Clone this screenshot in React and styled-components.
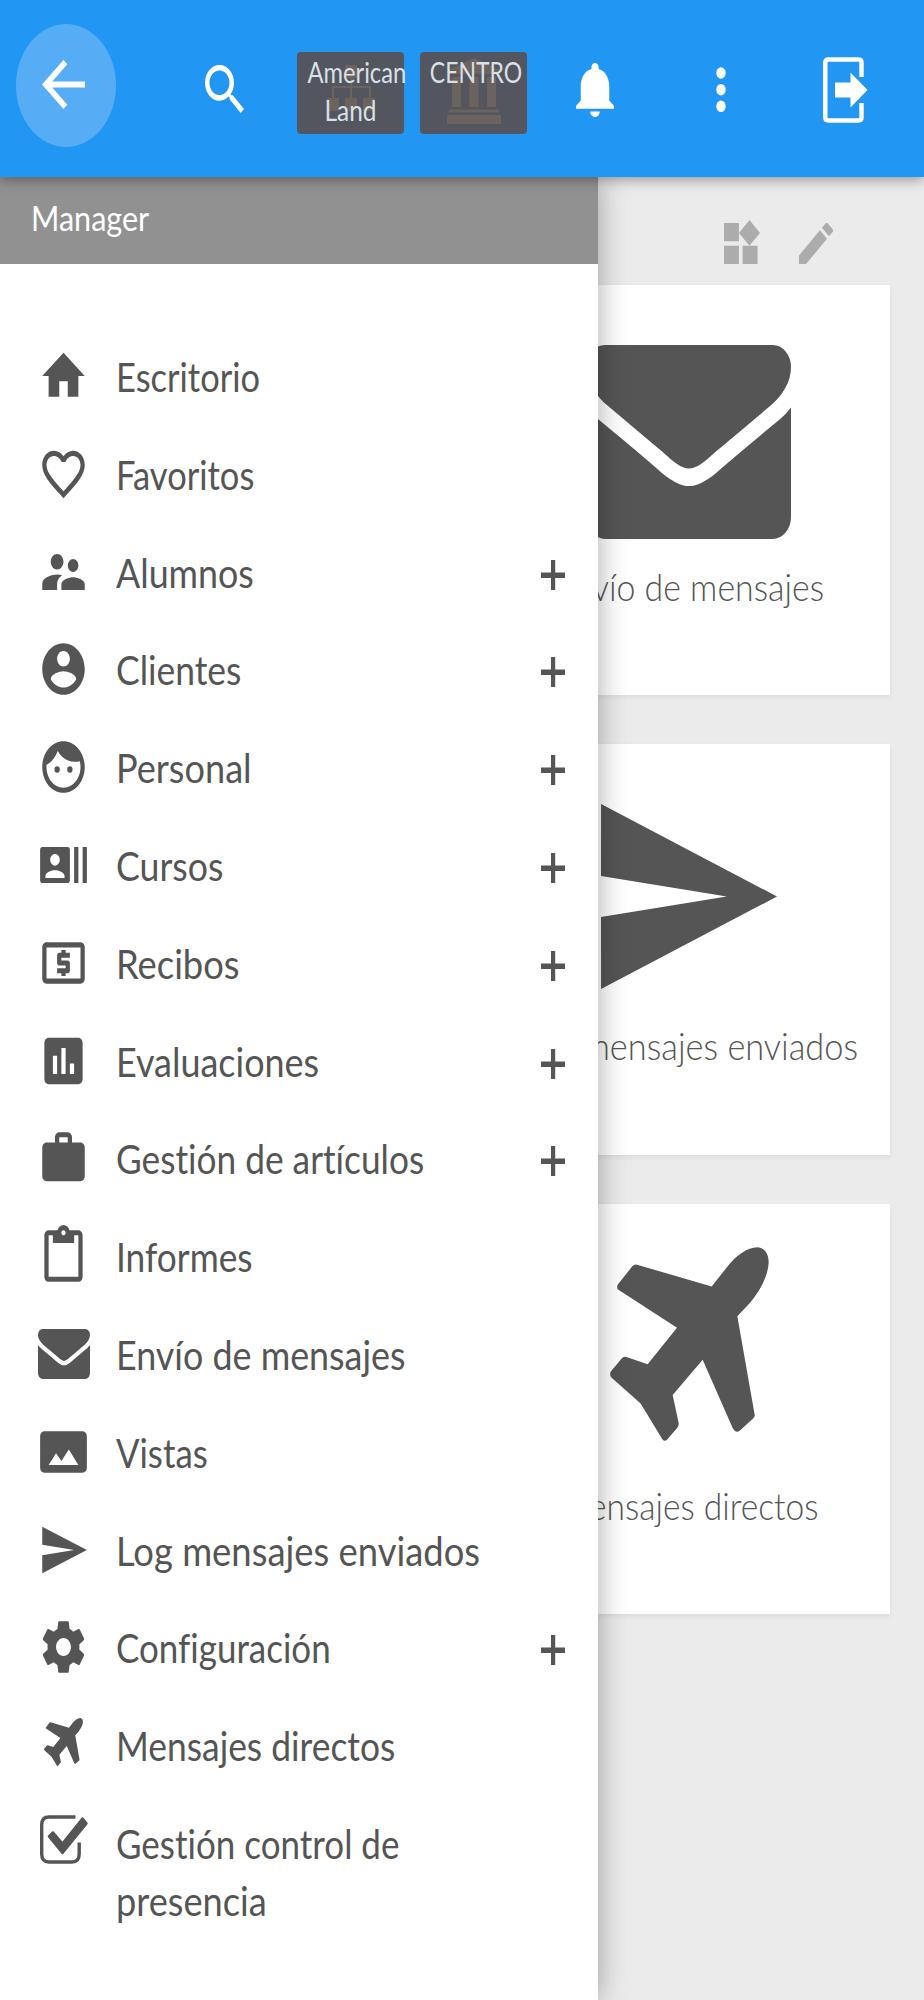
import React, { useLayoutEffect, useRef, useState } from "react";
import styled, { createGlobalStyle } from "styled-components";
import {
  MdArrowBack,
  MdAssessment,
  MdEdit,
  MdFace,
  MdFavoriteBorder,
  MdLocalAtm,
  MdRecentActors,
  MdSearch,
  MdSend,
  MdSupervisorAccount,
  MdWidgets,
  MdWork,
} from "react-icons/md";

const STRETCH = 1.22;

const GlobalStyle = createGlobalStyle`
  * {
    box-sizing: border-box;
  }
  body {
    margin: 0;
    background: #ebebeb;
    font-family: Lato, "Open Sans", sans-serif;
    font-variant-ligatures: none;
    color: #555;
  }
`;

const Page = styled.div`
  display: flex;
  flex-direction: column;
  width: 924px;
  height: 2000px;
  overflow: hidden;
`;

const Header = styled.header`
  position: relative;
  z-index: 2;
  flex: none;
  display: flex;
  align-items: flex-start;
  height: 177px;
  padding-left: 16px;
  background: #2196f3;
  color: #fff;
  box-shadow: 0 3px 12px rgba(0, 0, 0, 0.36);
`;

const BackButton = styled.div`
  display: flex;
  align-items: center;
  width: 100px;
  height: 123px;
  margin-top: 24px;
  padding: 0 0 2px 26px;
  border-radius: 50%;
  background: #56adf6;
`;

const HeaderIcon = styled.div`
  display: flex;
  margin: ${(props) => props.$top}px 0 0 ${(props) => props.$left}px;
`;

const Chip = styled.div`
  display: grid;
  grid-template-columns: 107px;
  justify-items: center;
  align-items: start;
  width: 107px;
  height: 82px;
  margin: 52px 0 0 ${(props) => props.$left}px;
  border-radius: 4px;
  background: #53565f;
  color: #d9e0e8;

  > * {
    grid-area: 1 / 1;
  }
`;

const ChipIcon = styled.div`
  display: flex;
  margin-top: ${(props) => props.$top}px;
  color: #6c635f;
`;

const ChipText = styled.div`
  display: flex;
  flex-direction: column;
  align-items: center;
  padding-top: 1px;
  font-size: 23px;
  line-height: 38px;
`;

const ChipLine = styled.div`
  padding-left: ${(props) => props.$indent || 0}px;
`;

const Body = styled.div`
  display: flex;
  flex: 1;
`;

const Drawer = styled.aside`
  position: relative;
  z-index: 1;
  flex: none;
  width: 598px;
  background: #fff;
  box-shadow: 0 0 28px rgba(0, 0, 0, 0.34);
`;

const DrawerTitle = styled.div`
  display: flex;
  height: 87px;
  padding: 23px 0 0 31px;
  background: #919191;
  color: #fff;
  font-size: 29px;
  line-height: 40px;
`;

const Menu = styled.nav`
  display: flex;
  flex-direction: column;
  padding-top: 63px;
`;

const MenuItem = styled.div`
  display: flex;
  align-items: flex-start;
  min-height: 97.8px;
  padding: 18px 33px 0 37.5px;
`;

const IconSlot = styled.div`
  display: flex;
  flex: none;
  align-items: center;
  justify-content: center;
  width: 52px;
  height: 62px;
  margin-right: 26.5px;
  padding-bottom: ${(props) => props.$lift || 0}px;
`;

const MenuLabel = styled.div`
  flex: 1;
  padding-top: 2px;
  font-size: 34px;
  line-height: 57px;
`;

const PlusSlot = styled.div`
  display: flex;
  padding-top: 19px;
`;

const Desktop = styled.main`
  flex: 1;
  display: flex;
  flex-direction: column;
  min-width: 0;
`;

const Tools = styled.div`
  display: flex;
  align-items: flex-end;
  justify-content: flex-end;
  gap: 39px;
  height: 87px;
  padding-right: 91px;
  margin-bottom: 21px;
  color: #acacac;
`;

const Cards = styled.div`
  display: flex;
  flex-direction: column;
  gap: 49px;
  margin-left: -110px;
`;

const Card = styled.section`
  display: flex;
  flex-direction: column;
  align-items: center;
  width: 402px;
  height: 410.3px;
  background: #fff;
  box-shadow: 0 2px 5px rgba(0, 0, 0, 0.07);
`;

const CardIcon = styled.div`
  display: flex;
  height: 273px;
  padding-top: ${(props) => props.$top}px;
`;

const CardLabel = styled.div`
  font-size: 31px;
  font-weight: 300;
  line-height: 57px;
`;

const Line = styled.span`
  display: block;
  width: max-content;
  white-space: nowrap;
  transform-origin: ${(props) => (props.$center ? "center" : "left")};
`;

// One line of tall text, squeezed to the given width
function Text({ width, center, children }) {
  const ref = useRef(null);
  const [ratio, setRatio] = useState(1);

  useLayoutEffect(() => {
    setRatio(width / ref.current.offsetWidth);
  }, [width]);

  return (
    <Line
      ref={ref}
      $center={center}
      style={{ transform: `scale(${ratio}, ${STRETCH})` }}
    >
      {children}
    </Line>
  );
}

const Glyph = ({ box, w, h, children }) => (
  <svg
    viewBox={box}
    width={w}
    height={h}
    preserveAspectRatio="none"
    fill="currentColor"
  >
    {children}
  </svg>
);

const Md = ({ icon: Icon, w = 51, h = 62, box = "0 0 24 24" }) => (
  <Icon
    viewBox={box}
    preserveAspectRatio="none"
    style={{ width: w, height: h, flex: "none" }}
  />
);

const Home = () => (
  <Glyph box="0 0 24 24" w={51} h={62}>
    <path d="M10 20v-6h4v6h5v-8h3L12 3 2 12h3v8z" />
  </Glyph>
);

const Account = () => (
  <Glyph box="0 0 24 24" w={51} h={62}>
    <path d="M12 2C6.48 2 2 6.48 2 12s4.48 10 10 10 10-4.48 10-10S17.52 2 12 2zm0 3c1.66 0 3 1.34 3 3s-1.34 3-3 3-3-1.34-3-3 1.34-3 3-3zm0 14.2c-2.5 0-4.71-1.28-6-3.22.03-1.99 4-3.08 6-3.08 1.99 0 5.97 1.09 6 3.08-1.29 1.94-3.5 3.22-6 3.22z" />
  </Glyph>
);

const Clipboard = () => (
  <Glyph box="0 0 24 24" w={51} h={62}>
    <path d="M19 2h-4.18C14.4.84 13.3 0 12 0c-1.3 0-2.4.84-2.82 2H5c-1.1 0-2 .9-2 2v16c0 1.1.9 2 2 2h14c1.1 0 2-.9 2-2V4c0-1.1-.9-2-2-2zm-7 0c.55 0 1 .45 1 1s-.45 1-1 1-1-.45-1-1 .45-1 1-1zm7 18H5V4h2v3h10V4h2v16z" />
  </Glyph>
);

const Picture = () => (
  <Glyph box="0 0 24 24" w={51} h={62}>
    <path d="M21 4H3C1.9 4 1 4.9 1 6v12c0 1.1.9 2 2 2h18c1.1 0 2-.9 2-2V6c0-1.1-.9-2-2-2zM5 17l3.5-4.5 2.5 3L14.5 11l4.5 6z" />
  </Glyph>
);

const Gear = () => (
  <Glyph box="0 0 24 24" w={51} h={62}>
    <path d="M19.43 12.98c.04-.32.07-.64.07-.98s-.03-.66-.07-.98l2.11-1.65c.19-.15.24-.42.12-.64l-2-3.46c-.12-.22-.39-.3-.61-.22l-2.49 1c-.52-.4-1.08-.73-1.69-.98l-.38-2.65C14.46 2.18 14.25 2 14 2h-4c-.25 0-.46.18-.49.42l-.38 2.65c-.61.25-1.17.59-1.69.98l-2.49-1c-.23-.09-.49 0-.61.22l-2 3.46c-.13.22-.07.49.12.64l2.11 1.65c-.04.32-.07.65-.07.98s.03.66.07.98l-2.11 1.65c-.19.15-.24.42-.12.64l2 3.46c.12.22.39.3.61.22l2.49-1c.52.4 1.08.73 1.69.98l.38 2.65c.03.24.24.42.49.42h4c.25 0 .46-.18.49-.42l.38-2.65c.61-.25 1.17-.59 1.69-.98l2.49 1c.23.09.49 0 .61-.22l2-3.46c.12-.22.07-.49-.12-.64l-2.11-1.65zM12 15.5c-1.93 0-3.5-1.57-3.5-3.5s1.57-3.5 3.5-3.5 3.5 1.57 3.5 3.5-1.57 3.5-3.5 3.5z" />
  </Glyph>
);

const Envelope = ({ w = 52, h = 50 }) => (
  <Glyph box="0 256 1792 1408" w={w} h={h}>
    <path d="M1792 710v794q0 66-47 113t-113 47h-1472q-66 0-113-47t-47-113v-794q44 49 101 87 362 246 497 345 57 42 92.5 65.5t94.5 48 110 24.5h2q51 0 110-24.5t94.5-48 92.5-65.5q170-123 498-345 57-39 100-87zm0-294q0 79-49 151t-122 123q-376 261-468 325-10 7-42.5 31t-54 38.5-52 32.5-57.5 27-50 9h-2q-23 0-50-9t-57.5-27-52-32.5-54-38.5-42.5-31q-91-64-262-182.5t-205-142.5q-62-42-117-115.5t-55-136.5q0-78 41.5-130t118.5-52h1472q65 0 112.5 47t47.5 113z" />
  </Glyph>
);

const Plane = ({ w = 39, h = 48 }) => (
  <Glyph box="88 198 477 583" w={w} h={h}>
    <path d="M530 199C548 199 564 215 564 243C563 290 530 340 504 370L470 406L522 702Q523 708 518 713L477 750Q469 757 462 750L456 742L366 537L276 643L294 727Q295 735 290 741L259 777Q252 783 246 777L184 675Q180 668 174 663L92 590Q86 582 90 573L123 533Q128 527 135 528L201 550L289 441L112 326Q107 318 112 310L155 256Q161 249 169 251L393 317L440 257C465 225 500 199 530 199Z" />
  </Glyph>
);

const Check = () => (
  <Glyph box="0 0 48 49" w={48} h={49}>
    <path
      d="M35.500 2H9Q1.700 2 1.700 10V39Q1.700 47 9 47H32Q39.200 47 39.200 39V27.500"
      fill="none"
      stroke="currentColor"
      strokeWidth="3.400"
    />
    <path
      d="M9 21.500L13 17.500L22.500 28.500L42.500 3.500L46.500 8.500L22.500 38Z"
      stroke="currentColor"
      strokeWidth="2.500"
      strokeLinejoin="round"
    />
  </Glyph>
);

const Plus = () => (
  <Glyph box="0 0 24 30" w={24} h={30}>
    <path d="M10 0h4.200v12.500H24v5.500h-9.800V30H10V18H0v-5.500h10z" />
  </Glyph>
);

const Bell = () => (
  <Glyph box="4 2.5 16 19.5" w={38} h={54}>
    <path d="M12 22c1.1 0 2-.9 2-2h-4c0 1.1.9 2 2 2zm6-6v-5c0-3.07-1.64-5.64-4.5-6.32V4c0-.83-.67-1.5-1.5-1.5s-1.5.67-1.5 1.5v.68C7.63 5.36 6 7.92 6 11v5l-2 2v1h16v-1l-2-2z" />
  </Glyph>
);

const Dots = () => (
  <Glyph box="0 0 10 46" w={10} h={46}>
    <ellipse cx="5" cy="6" rx="4.7" ry="5.8" />
    <ellipse cx="5" cy="22.7" rx="4.7" ry="5.8" />
    <ellipse cx="5" cy="39.3" rx="4.7" ry="5.8" />
  </Glyph>
);

const Exit = () => (
  <Glyph box="0 0 45 66" w={45} h={66}>
    <path
      d="M38.500 20V5.500Q38.500 2.500 35.500 2.500H5.500Q2.300 2.500 2.300 5.500V60.500Q2.300 63.500 5.500 63.500H35.500Q38.500 63.500 38.500 60.500V46"
      fill="none"
      stroke="currentColor"
      strokeWidth="4.4"
    />
    <path d="M12 25.5H27.500V15.500L44.500 33L27.500 50.500V40.500H12Z" />
  </Glyph>
);

const Sitemap = () => (
  <Glyph box="0 0 48 46" w={48} h={46}>
    <path d="M18 0h12v13h-12zM23 13h2v8h19v12h-2V23H25v10h-2V23H7v10h-2V21h18zM0 33h12v13H0zM18 33h12v13H18zM36 33h12v13H36z" />
  </Glyph>
);

const Bank = () => (
  <Glyph box="0 0 54 66" w={54} h={66}>
    <path d="M27 0L53 12V16H1V12zM5 19h9v30H5zM22.500 19h9v30h-9zM40 19h9v30h-9zM2 51.500h50v3H2zM0 57h54v9H0z" />
  </Glyph>
);

const menu = [
  { icon: <Home />, lines: [["Escritorio", 144]] },
  { icon: <Md icon={MdFavoriteBorder} />, lines: [["Favoritos", 138]] },
  { icon: <Md icon={MdSupervisorAccount} />, lines: [["Alumnos", 138]], more: true },
  { icon: <Account />, lines: [["Clientes", 125]], more: true },
  { icon: <Md icon={MdFace} />, lines: [["Personal", 136]], more: true },
  { icon: <Md icon={MdRecentActors} />, lines: [["Cursos", 107]], more: true },
  { icon: <Md icon={MdLocalAtm} />, lines: [["Recibos", 124]], more: true },
  { icon: <Md icon={MdAssessment} />, lines: [["Evaluaciones", 203]], more: true },
  { icon: <Md icon={MdWork} />, lines: [["Gestión de artículos", 308]], more: true },
  { icon: <Clipboard />, lines: [["Informes", 137]] },
  { icon: <Envelope />, lines: [["Envío de mensajes", 290]] },
  { icon: <Picture />, lines: [["Vistas", 92]] },
  { icon: <Md icon={MdSend} />, lines: [["Log mensajes enviados", 364]] },
  { icon: <Gear />, lines: [["Configuración", 215]], more: true },
  { icon: <Plane />, lines: [["Mensajes directos", 279]], lift: 7 },
  {
    icon: <Check />,
    lines: [
      ["Gestión control de", 283],
      ["presencia", 151],
    ],
    lift: 7,
  },
];

const cards = [
  { icon: <Envelope w={204} h={194} />, label: "Envío de mensajes", width: 270, top: 60 },
  {
    icon: <Md icon={MdSend} w={176} h={185} box="2 3 21 18" />,
    label: "Log mensajes enviados",
    width: 338,
    top: 60,
  },
  { icon: <Plane w={159} h={194} />, label: "Mensajes directos", width: 260, top: 43 },
];

export default function App() {
  return (
    <Page>
      <GlobalStyle />
      <Header>
        <BackButton>
          <Md icon={MdArrowBack} w={43} h={49} box="4 4 16 16" />
        </BackButton>
        <HeaderIcon $left={89} $top={65}>
          <Md icon={MdSearch} w={39} h={48} box="3 3 17.49 17.49" />
        </HeaderIcon>
        <Chip $left={53}>
          <ChipIcon $top={13}>
            <Sitemap />
          </ChipIcon>
          <ChipText>
            <ChipLine $indent={12}>
              <Text width={99} center>American</Text>
            </ChipLine>
            <ChipLine>
              <Text width={52} center>Land</Text>
            </ChipLine>
          </ChipText>
        </Chip>
        <Chip $left={16}>
          <ChipIcon $top={6}>
            <Bank />
          </ChipIcon>
          <ChipText>
            <ChipLine $indent={5}>
              <Text width={92} center>CENTRO</Text>
            </ChipLine>
          </ChipText>
        </Chip>
        <HeaderIcon $left={49} $top={63}>
          <Bell />
        </HeaderIcon>
        <HeaderIcon $left={102} $top={67}>
          <Dots />
        </HeaderIcon>
        <HeaderIcon $left={97} $top={57}>
          <Exit />
        </HeaderIcon>
      </Header>
      <Body>
        <Drawer>
          <DrawerTitle>
            <Text width={118}>Manager</Text>
          </DrawerTitle>
          <Menu>
            {menu.map(({ icon, lines, more, lift }) => (
              <MenuItem key={lines[0][0]}>
                <IconSlot $lift={lift}>{icon}</IconSlot>
                <MenuLabel>
                  {lines.map(([text, width]) => (
                    <Text key={text} width={width}>{text}</Text>
                  ))}
                </MenuLabel>
                {more && (
                  <PlusSlot>
                    <Plus />
                  </PlusSlot>
                )}
              </MenuItem>
            ))}
          </Menu>
        </Drawer>
        <Desktop>
          <Tools>
            <Md icon={MdWidgets} w={36} h={44} box="3 1.66 19.31 19.34" />
            <Md icon={MdEdit} w={34} h={41} box="3 3 18 18" />
          </Tools>
          <Cards>
            {cards.map(({ icon, label, width, top }) => (
              <Card key={label}>
                <CardIcon $top={top}>{icon}</CardIcon>
                <CardLabel>
                  <Text width={width} center>{label}</Text>
                </CardLabel>
              </Card>
            ))}
          </Cards>
        </Desktop>
      </Body>
    </Page>
  );
}
